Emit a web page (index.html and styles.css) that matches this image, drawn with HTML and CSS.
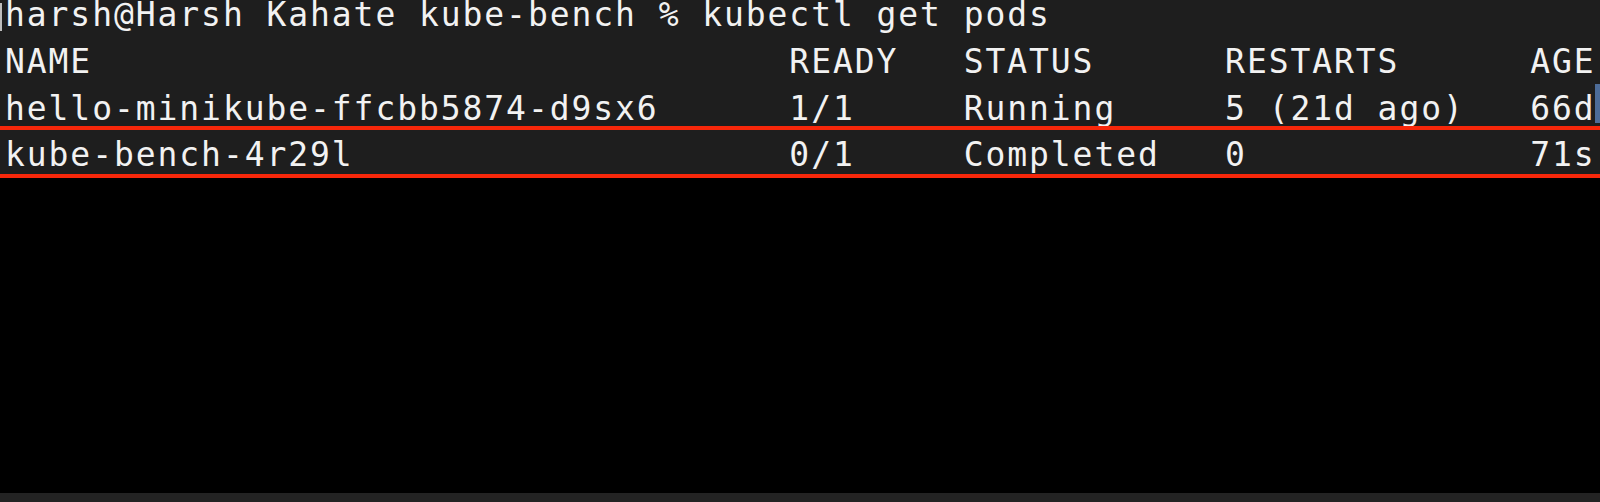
FILE: index.html
```html
<!DOCTYPE html>
<html lang="en">
<head>
<meta charset="utf-8">
<title>kubectl get pods</title>
<link rel="stylesheet" href="styles.css">
</head>
<body>
<div class="window">
  <div class="term">
    <div class="rows">
      <div class="line prompt"><span class="bracket"></span>harsh@Harsh Kahate kube-bench % kubectl get pods</div>
      <div class="line">NAME                                READY   STATUS      RESTARTS      AGE</div>
      <div class="line">hello-minikube-ffcbb5874-d9sx6      1/1     Running     5 (21d ago)   66d<span class="cursor"></span></div>
    </div>
    <div class="line highlight">kube-bench-4r29l                    0/1     Completed   0             71s</div>
  </div>
  <div class="blank"></div>
  <div class="statusbar"></div>
</div>
</body>
</html>
```

FILE: styles.css
```css
html, body {
  margin: 0;
  padding: 0;
  background: #000;
  width: 1600px;
  height: 502px;
  overflow: hidden;
}

.window {
  display: flex;
  flex-direction: column;
  width: 1600px;
  height: 502px;
}

.term {
  background: #1e1e1e;
  display: flex;
  flex-direction: column;
  font-family: "DejaVu Sans Mono", "Liberation Mono", monospace;
  font-size: 33px;
  letter-spacing: 1.92px;
  color: #f2f2f2;
}

.rows {
  display: flex;
  flex-direction: column;
  gap: 18px;
}

.line {
  position: relative;
  white-space: pre;
  line-height: 29px;
  padding-left: 5px;
  overflow: visible;
}

.bracket {
  position: absolute;
  left: 0;
  top: 3px;
  width: 2px;
  height: 28px;
  border-left: 2px solid #bdbdbd;
  border-top: 1px solid #bdbdbd;
  border-bottom: 1px solid #bdbdbd;
  box-sizing: border-box;
}

.cursor {
  position: absolute;
  left: 1595px;
  top: -10px;
  width: 6px;
  height: 39px;
  background: #4d6c98;
}

.highlight {
  margin-top: 3px;
  border-top: 4px solid #f7270a;
  border-bottom: 4px solid #f7270a;
  padding-top: 6px;
  line-height: 38px;
}

.blank {
  flex: 1;
  background: #000;
}

.statusbar {
  height: 9px;
  background: #232323;
}
```
